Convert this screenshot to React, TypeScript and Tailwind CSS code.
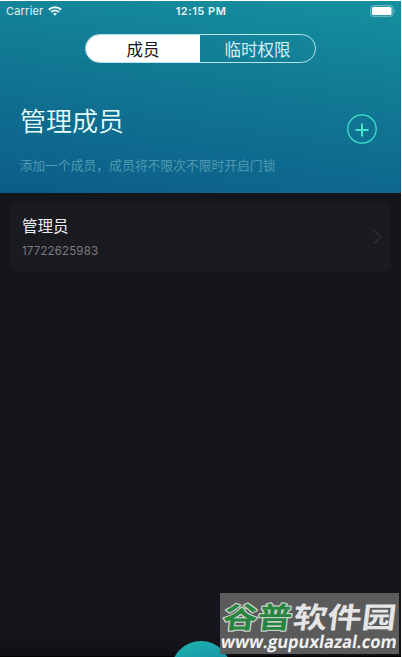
import React from "react";

function StatusBar() {
  return (
    <div className="flex h-[21px] items-center justify-between pl-[6px] pr-[5px] text-[11px] leading-[21px] text-white/90">
      <div className="flex w-[120px] items-center gap-[5px]">
        <span className="tracking-[0.2px]">Carrier</span>
        <svg className="-mt-px" width="14" height="10" viewBox="0 0 14 10" fill="none" stroke="currentColor" strokeWidth="2">
          <path d="M0.8 3.7C4.2 0.3 9.8 0.3 13.2 3.7" />
          <path d="M3 6.1C5.2 4 8.8 4 11 6.1" />
          <path d="M7 9.8L4.9 7.7C6.1 6.7 7.9 6.7 9.1 7.7Z" fill="currentColor" stroke="none" />
        </svg>
      </div>
      <span className="font-semibold tracking-[0.5px]">12:15 PM</span>
      <div className="flex w-[120px] justify-end">
        <svg className="-mt-px" width="26" height="12" viewBox="0 0 26 12">
          <rect x="0.5" y="0.5" width="22.5" height="11" rx="3" fill="white" fillOpacity="0.12" stroke="white" strokeOpacity="0.32" />
          <rect x="2" y="2" width="19.5" height="8" rx="1.5" fill="white" />
          <path d="M24.3 4.2C25.7 5 25.7 7 24.3 7.8Z" fill="white" fillOpacity="0.4" />
        </svg>
      </div>
    </div>
  );
}

function Segments() {
  return (
    <div className="mx-auto mt-[12px] flex h-[29px] w-[231px] overflow-hidden rounded-full border border-[#b9e4ea] text-[16.5px] leading-[30px]">
      <div className="w-[114px] bg-white text-center text-[#15161b]">成员</div>
      <div className="flex-1 text-center text-[#d5eef2]">临时权限</div>
    </div>
  );
}

function Watermark() {
  return (
    <div className="absolute left-[220px] top-[593px] h-[61px] w-[179px] bg-[#5b5b5c]">
      <svg width="179" height="61" viewBox="0 0 179 61" className="overflow-visible font-['Noto_Sans_CJK_SC','Noto_Sans',sans-serif]">
        <g fontWeight="700" fontSize="29" transform="translate(0 35) skewX(-7)">
          <text x="2" y="0" textLength="69" lengthAdjust="spacingAndGlyphs" fill="#28853f" stroke="#c9d0c9" strokeWidth="2.4" strokeLinejoin="round" paintOrder="stroke">谷普</text>
          <text x="72" y="0" textLength="103" lengthAdjust="spacingAndGlyphs" fill="#e5e5e5">软件园</text>
        </g>
        <g transform="translate(0 55) skewX(-9)">
          <text x="0" y="0" textLength="176" lengthAdjust="spacingAndGlyphs" fill="#f0f0f0" fontFamily="'Open Sans', sans-serif" fontWeight="700" fontSize="17.5">www.gupuxlazal.com</text>
        </g>
      </svg>
    </div>
  );
}

export default function App() {
  return (
    <div className="relative h-[657px] w-[402px] bg-white pt-px font-['Inter','Noto_Sans_CJK_SC',sans-serif]">
      <div className="relative flex h-[656px] w-[401px] flex-col overflow-hidden bg-[#15161b]">
        <header className="h-[192px] shrink-0 bg-[linear-gradient(188deg,#15919f_0%,#117994_42%,#0c5c89_100%)]">
          <StatusBar />
          <Segments />
          <div className="mt-[38px] flex justify-between pl-[20px] pr-[24px]">
            <h1 className="mt-[2px] text-[26px] font-[350] leading-[38px] text-[#e8ffff]">管理成员</h1>
            <svg className="mt-[13px]" width="30" height="30" viewBox="0 0 30 30" fill="none" stroke="#42e5ca">
              <circle cx="15" cy="15" r="14.2" strokeWidth="1.2" />
              <path d="M8.5 16H21.5M15 9.5V22.5" strokeWidth="2" />
            </svg>
          </div>
          <p className="mt-[12px] pl-[19.5px] text-[12.8px] font-[350] leading-[20px] text-[#569eb5]">添加一个成员，成员将不限次不限时开启门锁</p>
        </header>
        <section className="mx-[10px] mt-[10px] flex h-[68px] shrink-0 items-center justify-between rounded-[5px] bg-[#1a1a21] pl-[12px] pr-[9px]">
          <div className="pt-[2px]">
            <div className="text-[15.5px] leading-[22px] text-[#eeeeef]">管理员</div>
            <div className="mt-[4px] text-[11.5px] leading-[18px] tracking-[0.16px] text-[#7a7a7e]">17722625983</div>
          </div>
          <svg width="9" height="16" viewBox="0 0 9 16" fill="none" stroke="#302d32" strokeWidth="1.4">
            <path d="M1 1.5L7.7 8L1 14.5" />
          </svg>
        </section>
        <div className="absolute bottom-0 left-0 h-[23px] w-full bg-[linear-gradient(#15161b,#100e14)]" />
        <div className="absolute bottom-0 left-0 h-px w-full bg-[#050204]" />
        <div className="absolute left-[171px] top-[640px] h-[60px] w-[60px] rounded-full bg-[linear-gradient(165deg,#20b5b4,#148f9e_50%)] [clip-path:inset(0_0_44px_0)]" />
      </div>
      <Watermark />
    </div>
  );
}
